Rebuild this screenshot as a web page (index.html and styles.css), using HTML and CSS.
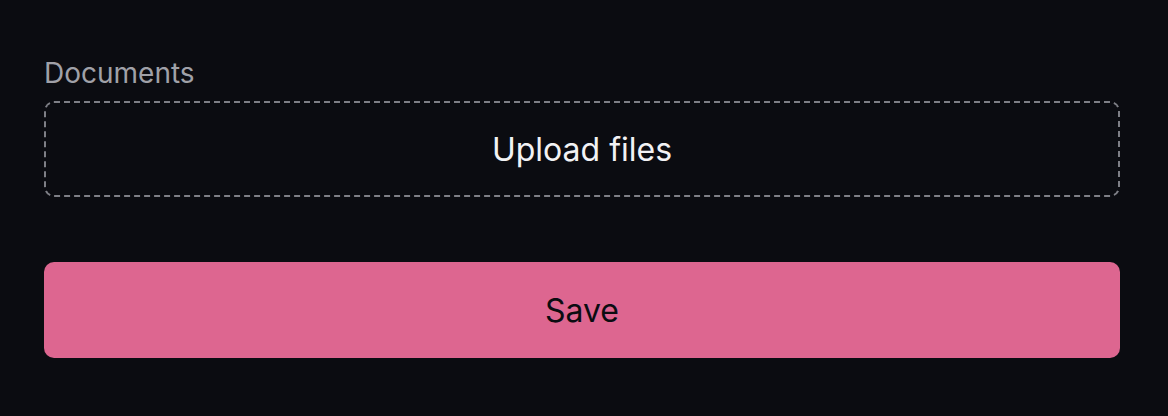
FILE: index.html
```html
<!DOCTYPE html>
<html lang="en">
<head>
    <meta charset="UTF-8">
    <meta name="viewport" content="width=device-width, initial-scale=1.0">
    <title>Documents</title>
    <link rel="stylesheet" href="styles.css">
</head>
<body>
    <form class="container">
        <div class="form-group">
            <label class="label" for="files">Documents</label>
            <label class="dropzone" for="files">Upload files</label>
            <input type="file" id="files" class="file-input" multiple>
        </div>
        <button type="button" class="save">Save</button>
    </form>
</body>
</html>
```

FILE: styles.css
```css
body {
    font-family: Inter, "Noto Sans", sans-serif;
    margin: 0;
    padding: 0;
    background-color: #0b0c11;
}
.container {
    padding: 53px 48px 0 44px;
}
.form-group {
    display: flex;
    flex-direction: column;
}
.label {
    color: #a0a1a8;
    font-size: 28px;
    line-height: 40px;
    margin-bottom: 8px;
}
.dropzone {
    height: 92px;
    border: 2px dashed #7e7f86;
    border-radius: 10px;
    display: flex;
    align-items: center;
    justify-content: center;
    color: #f2f2f4;
    font-size: 32px;
    cursor: pointer;
}
.file-input {
    display: none;
}
.save {
    display: block;
    width: 100%;
    height: 96px;
    margin-top: 65px;
    border: none;
    border-radius: 10px;
    background: #dd6690;
    color: #0b0c11;
    font-family: inherit;
    font-size: 32px;
}
```
